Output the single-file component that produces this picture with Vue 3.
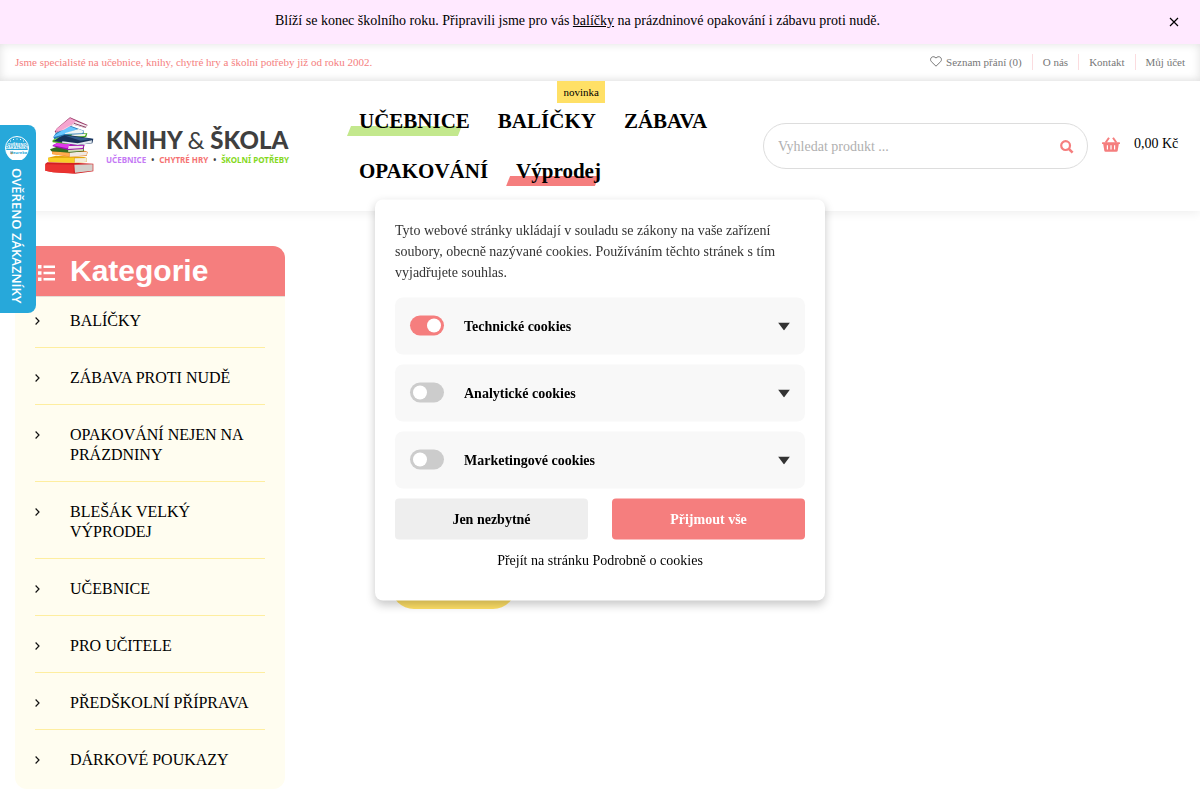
<script setup>
import { ref } from 'vue'

const query = ref('')
const topLinks = ['O nás', 'Kontakt', 'Můj účet']
const navItems = [
  { label: 'UČEBNICE', mark: 'mark-green' },
  { label: 'BALÍČKY', badge: 'novinka' },
  { label: 'ZÁBAVA' },
  { label: 'OPAKOVÁNÍ' },
  { label: 'Výprodej', mark: 'mark-red' },
]
const categories = [
  'BALÍČKY',
  'ZÁBAVA PROTI NUDĚ',
  'OPAKOVÁNÍ NEJEN NA PRÁZDNINY',
  'BLEŠÁK VELKÝ VÝPRODEJ',
  'UČEBNICE',
  'PRO UČITELE',
  'PŘEDŠKOLNÍ PŘÍPRAVA',
  'DÁRKOVÉ POUKAZY',
]
const cookies = ref([
  { id: 'technical', label: 'Technické cookies', on: true },
  { id: 'analytics', label: 'Analytické cookies', on: false },
  { id: 'marketing', label: 'Marketingové cookies', on: false },
])
</script>

<template>
  <div class="page">
    <div class="banner">
      <p>
        Blíží se konec školního roku. Připravili jsme pro vás
        <a href="#">balíčky</a> na prázdninové opakování i zábavu proti nudě.
      </p>
      <button type="button" class="banner-close" aria-label="Zavřít">
        <svg width="10" height="10" viewBox="0 0 10 10"><path d="M1 1l8 8M9 1l-8 8" stroke="#000" stroke-width="1.2" fill="none" /></svg>
      </button>
    </div>

    <div class="topbar">
      <span class="slogan">Jsme specialisté na učebnice, knihy, chytré hry a školní potřeby již od roku 2002.</span>
      <ul class="top-links">
        <li>
          <a href="#">
            <svg width="12" height="11" viewBox="0 0 12 11"><path d="M6 10.2L1.4 5.7C.1 4.3.4 2.2 1.7 1.2 3 .3 4.8.6 6 2.1 7.2.6 9 .3 10.3 1.2c1.3 1 1.6 3.1.3 4.5z" fill="none" stroke="#777" stroke-width="1" stroke-linejoin="round" /></svg>
            Seznam přání (0)
          </a>
        </li>
        <li v-for="l in topLinks" :key="l"><a href="#">{{ l }}</a></li>
      </ul>
    </div>

    <header class="header">
      <a class="logo" href="#">
        <svg class="books" width="49" height="57" viewBox="15 21 147 171">
          <path d="M16 161l6-4 78 1 60 3v23l-55 7-66-4-23-5z" fill="#d31f22" />
          <path d="M16 163l85 1v26l-62-3-23-5z" fill="#ea3330" />
          <path d="M103 164l55-1v19l-53 6z" fill="#d3d0cb" />
          <path d="M24 143l24-6 84 4 9 3-1 12-36 2-76-2z" fill="#e3a50e" />
          <path d="M24 144l78-1v15l-77-3z" fill="#f8cf27" />
          <path d="M104 145l36-1v11l-36 3z" fill="#f2ecda" />
          <path d="M36 124l24-9 78 8 5 3-3 12-52 2-52-8z" fill="#e77d1c" />
          <path d="M36 125l52 2v12l-51-6z" fill="#ffac4e" />
          <path d="M89 127l52-2-1 11-51 4z" fill="#f0e8e2" />
          <path d="M30 118l28-10 74 1v15l-44 4-54-4z" fill="#326c20" />
          <path d="M84 121l46-9v10l-45 4z" fill="#d4dbb8" />
          <path d="M38 106l24-13 72 12-4 12-46 3-46-11z" fill="#9f10ae" />
          <path d="M38 106l24-11 32 4-12 16z" fill="#df39e9" />
          <path d="M86 108l44-1-2 7-44 3z" fill="#f0e4ed" />
          <path d="M37 92l34-26 71 4-3 10-58 22-43-5z" fill="#46a71e" />
          <path d="M39 90l32-20 31-1-34 21z" fill="#7dee35" />
          <path d="M96 72l42-1-3 7-42 2z" fill="#f4f5e9" />
          <path d="M42 93l28-20 90 13-3 14-44 5z" fill="#173159" />
          <path d="M71 76l86 11-35 5z" fill="#315d8e" />
          <path d="M67 94l46 6 43-9-1 8-42 6-47-7z" fill="#e0e9ef" />
          <path d="M40 81l7-11 40-24 45 16-2 10-56 3-31 13z" fill="#2a79b6" />
          <path d="M44 76l43-28 25 10-40 15-31 9z" fill="#66c6ff" />
          <path d="M76 69l40-12 15 6-4 7-53 2z" fill="#eef5f6" />
          <path d="M44 65l7-10 39-33 53 23-6 9-37-10-53 24z" fill="#973866" />
          <path d="M49 57l41-33 20 10-37 25-25 7z" fill="#f5a5cf" />
          <path d="M98 42l10-8 34 13-5 7-37-10-47 23z" fill="#f6e8ef" />
          <path d="M102 40l36 12" stroke="#8c4868" stroke-width="3" />
        </svg>
        <span class="logo-text">
          <span class="logo-name">KNIHY <i>&amp;</i> ŠKOLA</span>
          <span class="logo-sub">
            <span class="violet">UČEBNICE</span><span>•</span><span class="coral">CHYTRÉ HRY</span><span>•</span><span class="lime">ŠKOLNÍ POTŘEBY</span>
          </span>
        </span>
      </a>

      <nav class="nav">
        <a v-for="n in navItems" :key="n.label" href="#" :class="n.mark">
          <span class="nav-label">{{ n.label }}</span>
          <span v-if="n.badge" class="badge">{{ n.badge }}</span>
        </a>
      </nav>

      <form class="search" role="search" @submit.prevent>
        <input v-model="query" type="text" placeholder="Vyhledat produkt ..." aria-label="Vyhledat produkt" />
        <button type="submit" aria-label="Hledat">
          <svg width="14" height="14" viewBox="0 0 14 14"><circle cx="5.6" cy="5.6" r="4.4" fill="none" stroke="#f57e7e" stroke-width="2.2" /><path d="M8.8 8.8l3.8 3.8" stroke="#f57e7e" stroke-width="2.6" /></svg>
        </button>
      </form>

      <a class="cart" href="#">
        <svg width="18" height="15" viewBox="0 0 18 15">
          <path d="M3.7 5.5L7 .8M14.3 5.5L11 .8" stroke="#f57e7e" stroke-width="2" fill="none" />
          <path fill-rule="evenodd" d="M.6 5.2h16.8q.6 0 .6.6v.6q0 .6-.6.6h-.6l-1.1 6.8q-.2 1-1.2 1H3.5q-1 0-1.2-1L1.200 7H.6Q0 7 0 6.400v-.6q0-.6.6-.6zM4.800 8.200v4.300h1.200V8.200zM8.400 8.200v4.300h1.200V8.200zM12 8.200v4.300h1.200V8.200z" fill="#f57e7e" />
        </svg>
        <span>0,00 Kč</span>
      </a>
    </header>

    <div class="content">
      <aside class="sidebar">
        <h2>
          <svg width="17" height="16" viewBox="0 0 17 16" fill="#fff"><path d="M0 0h3.500v3.500H0zM0 6.300h3.500v3.500H0zM0 12.500h3.500V16H0zM5.500 .5h11.500v2.500H5.500zM5.500 6.800h11.500v2.500H5.500zM5.500 13h11.500v2.500H5.500z" /></svg>
          Kategorie
        </h2>
        <ul>
          <li v-for="c in categories" :key="c">
            <a href="#">
              <svg width="5" height="8" viewBox="0 0 5 8"><path d="M.6.5L4 4 .6 7.500" fill="none" stroke="#111" stroke-width="1.2" /></svg>
              <span>{{ c }}</span>
            </a>
          </li>
        </ul>
      </aside>
      <main class="main"><div class="pill"></div></main>
    </div>

    <a class="verified" href="#">
      <svg width="24" height="24" viewBox="0 0 24 24">
        <circle cx="12" cy="12" r="11.500" fill="#27a8da" stroke="#fff" stroke-width="1" />
        <path d="M1 14h22A11 11 0 0 1 1 14z" fill="#fff" />
        <path d="M5 5h1M8 3.500h1M11.500 3h1M15 3.500h1M18 5h1" stroke="#fff" stroke-width="1.2" />
        <text x="12" y="9.500" class="seal">OVĚŘENO</text>
        <text x="12" y="13" class="seal">ZÁKAZNÍKY</text>
        <circle cx="6.500" cy="17" r="1.300" fill="#f7941e" />
        <text x="13.500" y="18.300" class="seal brand">Heureka</text>
      </svg>
      <span>OVĚŘENO ZÁKAZNÍKY</span>
    </a>

    <section class="consent" role="dialog" aria-label="Nastavení cookies">
      <p>
        Tyto webové stránky ukládají v souladu se zákony na vaše zařízení soubory, obecně nazývané
        cookies. Používáním těchto stránek s tím vyjadřujete souhlas.
      </p>
      <div v-for="c in cookies" :key="c.id" class="option">
        <input :id="c.id" v-model="c.on" type="checkbox" />
        <label :for="c.id">{{ c.label }}</label>
        <button type="button" :aria-label="'Podrobnosti: ' + c.label">
          <svg width="12" height="8" viewBox="0 0 12 8"><path d="M0 0h12L6 8z" fill="#333" /></svg>
        </button>
      </div>
      <div class="actions">
        <button type="button" class="plain">Jen nezbytné</button>
        <button type="button" class="accept">Přijmout vše</button>
      </div>
      <a class="more" href="#">Přejít na stránku Podrobně o cookies</a>
    </section>
  </div>
</template>

<style>
body {
  margin: 0;
  background: #fff;
  overflow-x: hidden;
}
</style>

<style scoped>
.page {
  font-family: "Liberation Serif", serif;
  font-size: 14px;
  line-height: 20px;
  color: #000;
}
.page * {
  box-sizing: border-box;
}
a {
  color: inherit;
  text-decoration: none;
}
ul {
  list-style: none;
  margin: 0;
  padding: 0;
}
button {
  border: 0;
  padding: 0;
  background: none;
  font: inherit;
  cursor: pointer;
}
svg {
  display: block;
  flex: none;
}

.banner {
  display: flex;
  align-items: center;
  height: 44px;
  padding: 0 15px;
  background: #ffe9ff;
}
.banner p {
  flex: 1;
  margin: 0;
  padding-bottom: 2px;
  text-align: center;
}
.banner a {
  text-decoration: underline;
}
.banner-close {
  width: 45px;
  height: 44px;
  display: flex;
  align-items: center;
  justify-content: flex-end;
  padding-right: 6px;
}

.topbar {
  display: flex;
  align-items: center;
  justify-content: space-between;
  height: 37px;
  padding: 0 15px 2px;
  font-size: 11px;
  box-shadow: inset 0 0 10px rgba(0, 0, 0, 0.12);
}
.slogan {
  color: #f57e7e;
}
.top-links {
  display: flex;
  color: #777;
  line-height: 16px;
}
.top-links li + li {
  margin-left: 10px;
  padding-left: 10px;
  border-left: 1px solid #fbdcdf;
}
.top-links a {
  display: flex;
  align-items: center;
  gap: 4px;
}

.header {
  display: grid;
  grid-template-columns: 314px minmax(0, 1fr) 325px 97px;
  align-items: center;
  padding: 15px 15px 15px 45px;
  background: #fff;
  box-shadow: 0 2px 10px rgba(0, 0, 0, 0.07);
}
.logo {
  display: flex;
  align-items: center;
  gap: 12px;
  padding-bottom: 2px;
}
.logo-text {
  width: 183px;
  padding-top: 4px;
  font-family: "Noto Sans", sans-serif;
  font-weight: 700;
  color: #3f3f3f;
}
.logo-name {
  display: block;
  font-family: Lato, sans-serif;
  font-weight: 900;
  font-size: 24px;
  line-height: 26px;
  white-space: nowrap;
}
.logo-name i {
  font-style: normal;
  font-weight: 400;
}
.logo-sub {
  display: flex;
  justify-content: space-between;
  font-size: 8px;
  line-height: 14px;
  white-space: nowrap;
}
.violet {
  color: #c57af5;
}
.coral {
  color: #f57272;
}
.lime {
  color: #84d81c;
}
.nav {
  display: flex;
  flex-wrap: wrap;
  column-gap: 28px;
  font-size: 21px;
  font-weight: 700;
  line-height: 50px;
}
.nav a {
  position: relative;
}
.nav-label {
  position: relative;
}
.mark-green::before,
.mark-red::before {
  content: "";
  position: absolute;
  left: -12px;
  right: 8px;
  top: 30px;
  height: 10px;
  background: #c3e88d;
  clip-path: polygon(4px 0, 100% 0, calc(100% - 4px) 100%, 0 100%);
}
.mark-red::before {
  left: -10px;
  right: 2px;
  background: #f57e7e;
}
.badge {
  position: absolute;
  top: -15px;
  right: -9px;
  padding: 0 6px;
  background: #ffe066;
  font-size: 11px;
  font-weight: 400;
  line-height: 22px;
}
.search {
  display: flex;
  align-items: center;
  height: 46px;
  padding: 2px 13px 0 14px;
  border: 1px solid #ddd;
  border-radius: 23px;
}
.search input {
  flex: 1;
  min-width: 0;
  border: 0;
  padding: 0;
  outline: 0;
  background: none;
  font: inherit;
}
.search input::placeholder {
  color: #b0b0b0;
  opacity: 1;
}
.cart {
  display: flex;
  align-items: center;
  gap: 14px;
  padding: 0 0 4px 14px;
  white-space: nowrap;
}

.content {
  display: flex;
  gap: 106px;
  padding: 35px 15px 12px;
}
.sidebar {
  flex: 0 0 270px;
  border-radius: 12px;
  overflow: hidden;
  background: #fffdf0;
}
.sidebar h2 {
  display: flex;
  align-items: center;
  gap: 15px;
  height: 51px;
  margin: 0;
  padding-left: 23px;
  border-bottom: 1px solid #e4dfd8;
  background: #f57e7e;
  color: #fff;
  font-family: "Liberation Sans", sans-serif;
  font-size: 30px;
}
.sidebar h2 svg {
  margin-top: 4px;
}
.sidebar ul {
  padding: 0 20px 3px;
  font-size: 16px;
}
.sidebar li + li {
  border-top: 1px solid #feeea0;
}
.sidebar a {
  display: flex;
  align-items: flex-start;
  gap: 30px;
  padding: 20px 0 16px;
}
.sidebar li:first-child a {
  padding-top: 14px;
}
.sidebar a svg {
  margin-top: 6px;
}
.main {
  flex: 1;
  padding-top: 317px;
}
.pill {
  width: 125px;
  height: 46px;
  border-radius: 23px;
  background: #ffe066;
}

.verified {
  position: fixed;
  left: 0;
  top: 125px;
  width: 36px;
  height: 188px;
  display: flex;
  flex-direction: column;
  align-items: center;
  gap: 8px;
  padding: 11px 3px 0 0;
  border-radius: 0 8px 8px 0;
  background: #27a8da;
  color: #fff;
}
.verified span {
  writing-mode: vertical-rl;
  font-family: "Open Sans", sans-serif;
  font-size: 13px;
  font-weight: 600;
  white-space: nowrap;
}
.seal {
  font-family: "Open Sans", sans-serif;
  font-size: 4px;
  font-weight: 700;
  fill: #fff;
  text-anchor: middle;
}
.brand {
  fill: #27a8da;
}

.consent {
  position: fixed;
  left: 50%;
  top: 50%;
  width: 450px;
  max-width: 100%;
  padding: 20px;
  transform: translate(-50%, -50%);
  border-radius: 8px;
  background: #fff;
  box-shadow: 0 4px 10px rgba(0, 0, 0, 0.22);
  line-height: 21px;
}
.consent p {
  margin: 0 0 15px;
  color: #333;
}
.option {
  display: flex;
  align-items: center;
  height: 57px;
  margin-bottom: 10px;
  padding: 0 15px;
  border-radius: 8px;
  background: #f8f8f8;
  font-weight: 700;
}
.option input {
  appearance: none;
  width: 34px;
  height: 20px;
  margin: 0 20px 2px 0;
  padding: 3px;
  border-radius: 10px;
  background: #ccc;
}
.option input::before {
  content: "";
  display: block;
  width: 14px;
  height: 14px;
  border-radius: 50%;
  background: #fff;
}
.option input:checked {
  background: #f57e7e;
}
.option input:checked::before {
  margin-left: auto;
}
.option label {
  flex: 1;
}
.actions {
  display: flex;
  gap: 24px;
}
.actions button {
  flex: 1;
  height: 41px;
  border-radius: 4px;
  font-weight: 700;
}
.plain {
  background: #eee;
}
.accept {
  background: #f57e7e;
  color: #fff;
}
.more {
  display: block;
  margin: 10px 0;
  text-align: center;
}
</style>
